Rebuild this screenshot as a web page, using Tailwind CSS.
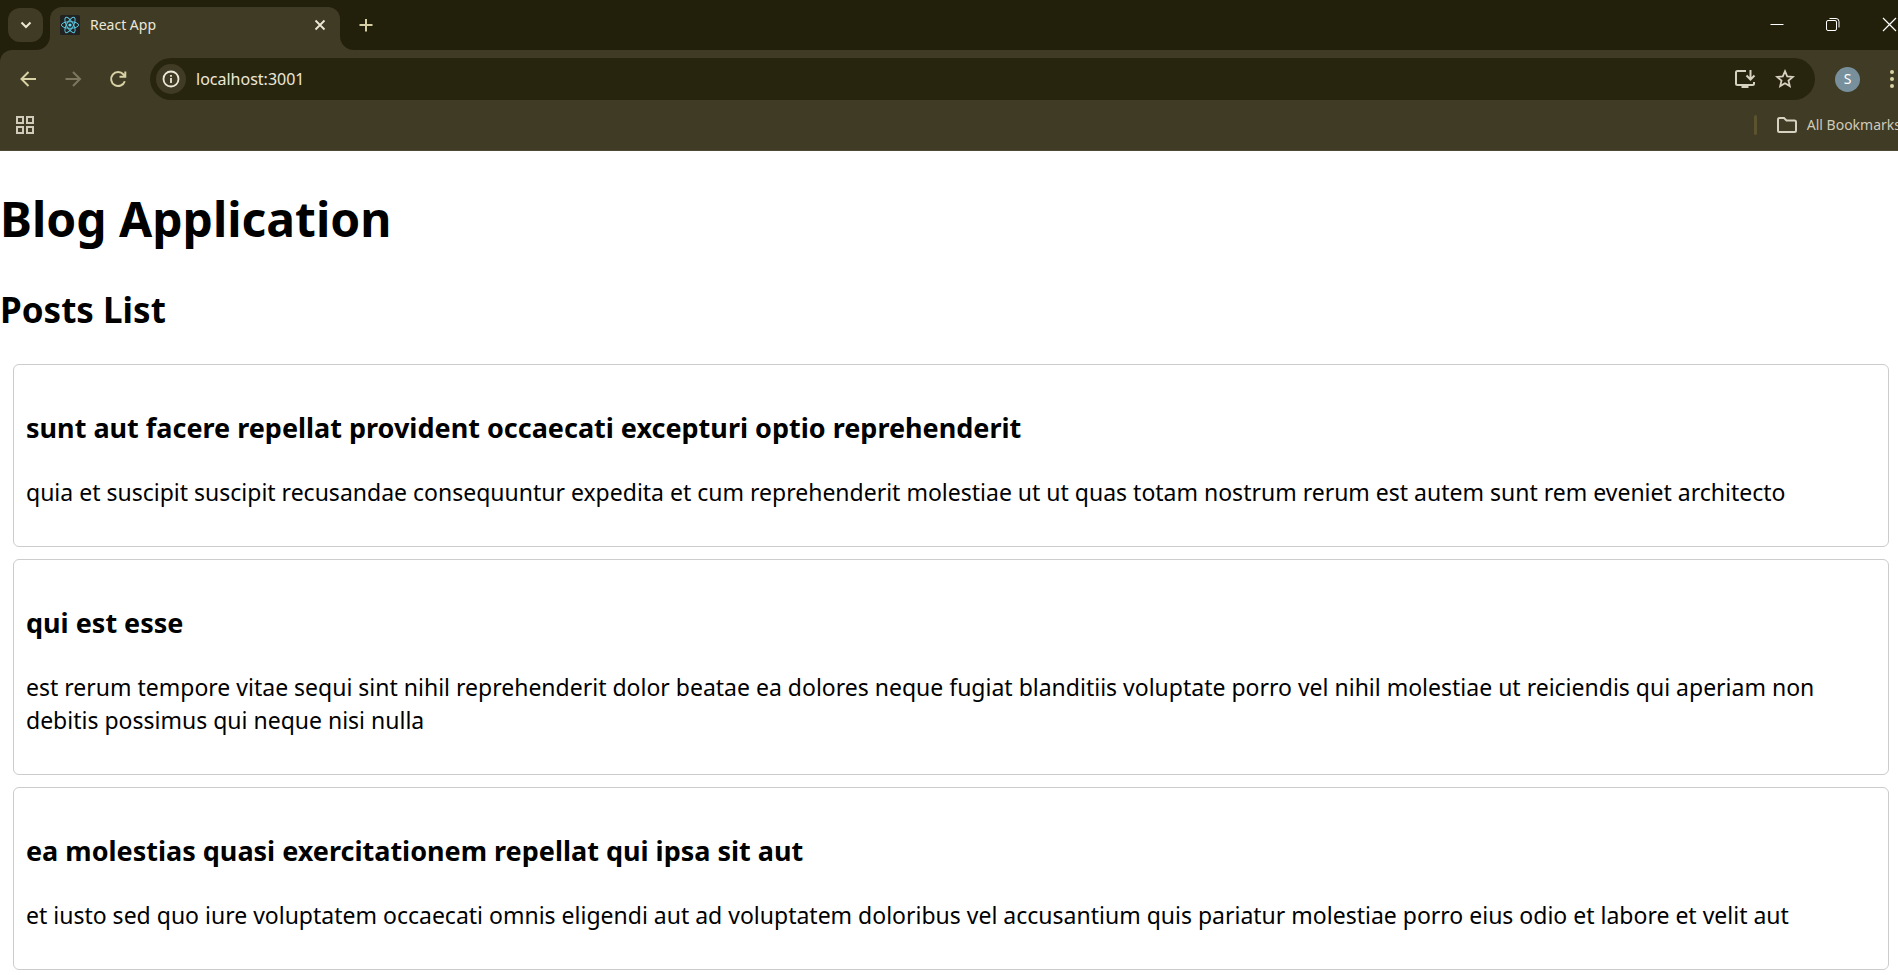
<!DOCTYPE html>
<html lang="en">
<head>
<meta charset="utf-8">
<meta name="viewport" content="width=device-width, initial-scale=1">
<title>React App</title>
<script src="https://cdn.jsdelivr.net/npm/@tailwindcss/browser@4"></script>
</head>
<body class="min-h-screen overflow-x-hidden bg-white font-['Noto_Sans','Open_Sans',sans-serif] text-black">
<header class="overflow-hidden bg-[#221f0b] text-[#ded9c3]">
  <!-- Tab strip -->
  <div class="flex h-[50px] items-start pl-2">
    <button type="button" aria-label="Search tabs" class="mt-2 flex h-[34px] w-[35px] shrink-0 items-center justify-center rounded-xl bg-[#403b24]">
      <svg class="size-4" viewBox="0 0 16 16" fill="none" stroke="#ece7d0" stroke-width="2"><path d="M3.500 5.500 8 10l4.500-4.500"/></svg>
    </button>
    <div class="relative ml-[7px] mt-[7px] flex h-[43px] w-[290px] shrink-0 items-center rounded-t-xl bg-[#403b24] pb-[7px] pl-[10px] pr-3">
      <svg class="absolute -left-[14px] bottom-0 size-[14px]" viewBox="0 0 14 14" fill="#403b24"><path d="M14 0v14H0A14 14 0 0 0 14 0z"/></svg>
      <svg class="absolute -right-[14px] bottom-0 size-[14px]" viewBox="0 0 14 14" fill="#403b24"><path d="M0 0v14h14A14 14 0 0 1 0 0z"/></svg>
      <svg class="size-5 shrink-0" viewBox="0 0 20 20" fill="none" stroke="#58c4dc" stroke-width="1">
        <rect width="20" height="20" rx="1.500" fill="#222222" stroke="none"/>
        <ellipse cx="10" cy="10" rx="8.600" ry="3.300"/>
        <ellipse cx="10" cy="10" rx="8.600" ry="3.300" transform="rotate(60 10 10)"/>
        <ellipse cx="10" cy="10" rx="8.600" ry="3.300" transform="rotate(120 10 10)"/>
        <circle cx="10" cy="10" r="1.600" fill="#61dafb" stroke="none"/>
      </svg>
      <span class="ml-[10px] grow text-sm text-[#ece8d8]">React App</span>
      <button type="button" aria-label="Close tab" class="flex size-4 items-center justify-center">
        <svg class="size-4" viewBox="0 0 16 16" stroke="#ece8d8" stroke-width="1.800"><path d="m3.500 3.500 9 9m0-9-9 9"/></svg>
      </button>
    </div>
    <button type="button" aria-label="New tab" class="ml-4 mt-[15px] flex size-5 shrink-0 items-center justify-center">
      <svg class="size-5" viewBox="0 0 20 20" stroke="#d6cfa3" stroke-width="2"><path d="M10 4v12.500M3.500 10h13"/></svg>
    </button>
    <div class="-mr-1 ml-auto flex shrink-0 gap-8 pt-3">
      <button type="button" aria-label="Minimize" class="flex size-6 items-center justify-center"><svg class="size-6" viewBox="0 0 24 24" stroke="#fff" fill="none"><path d="M4.500 12.500h13"/></svg></button>
      <button type="button" aria-label="Restore" class="flex size-6 items-center justify-center"><svg class="size-6" viewBox="0 0 24 24" stroke="#fff" fill="none"><rect x="4.500" y="8.500" width="10" height="10" rx="1.500"/><path d="M7.500 6.500H14a3 3 0 0 1 3 3v6"/></svg></button>
      <button type="button" aria-label="Close" class="flex size-6 items-center justify-center"><svg class="size-6" viewBox="0 0 24 24" stroke="#fff" stroke-width="1.200"><path d="m5 6 13 13m0-13L5 19"/></svg></button>
    </div>
  </div>

  <!-- Navigation toolbar and bookmarks bar -->
  <div class="rounded-tl-xl border-b border-[#504a35] bg-[#403b24]">
    <div class="flex h-[50px] items-end">
      <nav aria-label="Navigation" class="flex h-[42px] shrink-0 items-center gap-5 pl-[15px]">
        <button type="button" aria-label="Back" class="flex size-[25px] items-center justify-center"><svg class="size-6" viewBox="0 0 24 24" fill="none" stroke="#d8d1a6" stroke-width="2"><path d="M20 12H6M12.500 5l-7 7 7 7"/></svg></button>
        <button type="button" aria-label="Forward" class="flex size-[25px] items-center justify-center"><svg class="size-6" viewBox="0 0 24 24" fill="none" stroke="#7d7760" stroke-width="2"><path d="M4.500 12h14M12 5l7 7-7 7"/></svg></button>
        <button type="button" aria-label="Reload" class="flex size-[25px] items-center justify-center"><svg class="size-6" viewBox="0 0 24 24" fill="none" stroke="#d8d1a6" stroke-width="2"><path d="M18.800 14.200A7 7 0 1 1 17.500 7.500l1.200 1.300M19.300 4.500v5.300H13.500"/></svg></button>
      </nav>
      <div class="ml-5 flex h-[42px] min-w-0 grow items-center rounded-full bg-[#28250f] pl-[6px] pr-[18px]">
        <button type="button" aria-label="View site information" class="flex size-[30px] shrink-0 items-center justify-center rounded-full bg-[#403b24]">
          <svg class="size-[18px]" viewBox="0 0 18 18" fill="none" stroke="#ece8d8" stroke-width="1.800"><circle cx="9" cy="9" r="7.500"/><path d="M9 8v5M9 5v1.800"/></svg>
        </button>
        <input type="text" aria-label="Address" value="localhost:3001" class="ml-[10px] min-w-0 grow bg-transparent text-base text-[#ece8d8] outline-none">
        <button type="button" aria-label="Install app" class="flex size-6 shrink-0 items-center justify-center">
          <svg class="size-6" viewBox="0 0 24 24" fill="none" stroke="#d6d1c0" stroke-width="2"><path d="M13 4H4.500Q3 4 3 5.500v11Q3 18 4.500 18h15q1.500 0 1.500-1.500V15"/><path d="M17.500 3v9M13.500 8.500l4 4 4-4"/><path d="M8.500 19.500h7" stroke-width="3"/></svg>
        </button>
        <button type="button" aria-label="Bookmark this tab" class="ml-4 flex size-6 shrink-0 items-center justify-center">
          <svg class="size-6" viewBox="0 0 24 24" fill="none" stroke="#d6d1c0" stroke-width="1.800"><path d="m12 4.200 2.200 5.200 5.600.5-4.300 3.700 1.300 5.500-4.800-2.900-4.800 2.900 1.300-5.500-4.300-3.700 5.600-.5z"/></svg>
        </button>
      </div>
      <div class="flex h-[42px] shrink-0 items-center pl-5">
        <button type="button" aria-label="Profile" class="flex size-[25px] items-center justify-center rounded-full bg-[#78909c] text-sm text-white">S</button>
        <button type="button" aria-label="Chrome menu" class="ml-[26px] flex h-6 w-3 items-center justify-center"><svg class="h-6 w-3" viewBox="0 0 12 24" fill="#d8d1a6"><circle cx="6" cy="5" r="2"/><circle cx="6" cy="12" r="2"/><circle cx="6" cy="19" r="2"/></svg></button>
      </div>
    </div>
    <div class="flex h-[50px] items-center justify-between pl-[15px]">
      <button type="button" aria-label="Apps" class="flex size-5 items-center justify-center">
        <svg class="size-5" viewBox="0 0 20 20" fill="none" stroke="#cfcaba" stroke-width="2"><rect x="2" y="2" width="6" height="6"/><rect x="12" y="2" width="6" height="6"/><rect x="2" y="12" width="6" height="6"/><rect x="12" y="12" width="6" height="6"/></svg>
      </button>
      <div class="-mr-[3px] flex items-center">
        <span class="h-5 w-[3px] rounded-full bg-[#5b5330]"></span>
        <button type="button" class="ml-[18px] flex items-center gap-2 whitespace-nowrap text-sm text-[#cfcaba]">
          <svg class="size-6" viewBox="0 0 24 24" fill="none" stroke="#d6d1c0" stroke-width="2"><path d="M3 6.500Q3 5 4.500 5H9l2.500 2.500h8Q21 7.500 21 9v8.500Q21 19 19.500 19h-15Q3 19 3 17.500z"/></svg>
          All Bookmarks
        </button>
      </div>
    </div>
  </div>
</header>

<main>
  <h1 class="mt-[35px] text-[48px] leading-[66px] font-bold">Blog Application</h1>
  <section class="mt-[33px]">
    <h2 class="text-[35px] leading-[50px] font-bold">Posts List</h2>
    <div class="ml-[13px] mr-[9px] mt-[29px] flex flex-col gap-3">
      <article class="rounded-md border border-[#cccccc] px-3 pt-[43px] pb-[37px]">
        <h3 class="text-[27px] leading-[40px] font-bold">sunt aut facere repellat provident occaecati excepturi optio reprehenderit</h3>
        <p class="mt-7 text-[23px] leading-[33px]">quia et suscipit suscipit recusandae consequuntur expedita et cum reprehenderit molestiae ut ut quas totam nostrum rerum est autem sunt rem eveniet architecto</p>
      </article>
      <article class="rounded-md border border-[#cccccc] px-3 pt-[43px] pb-[37px]">
        <h3 class="text-[27px] leading-[40px] font-bold">qui est esse</h3>
        <p class="mt-7 text-[23px] leading-[33px]">est rerum tempore vitae sequi sint nihil reprehenderit dolor beatae ea dolores neque fugiat blanditiis voluptate porro vel nihil molestiae ut reiciendis qui aperiam non debitis possimus qui neque nisi nulla</p>
      </article>
      <article class="rounded-md border border-[#cccccc] px-3 pt-[43px] pb-[37px]">
        <h3 class="text-[27px] leading-[40px] font-bold">ea molestias quasi exercitationem repellat qui ipsa sit aut</h3>
        <p class="mt-7 text-[23px] leading-[33px]">et iusto sed quo iure voluptatem occaecati omnis eligendi aut ad voluptatem doloribus vel accusantium quis pariatur molestiae porro eius odio et labore et velit aut</p>
      </article>
    </div>
  </section>
</main>
</body>
</html>
